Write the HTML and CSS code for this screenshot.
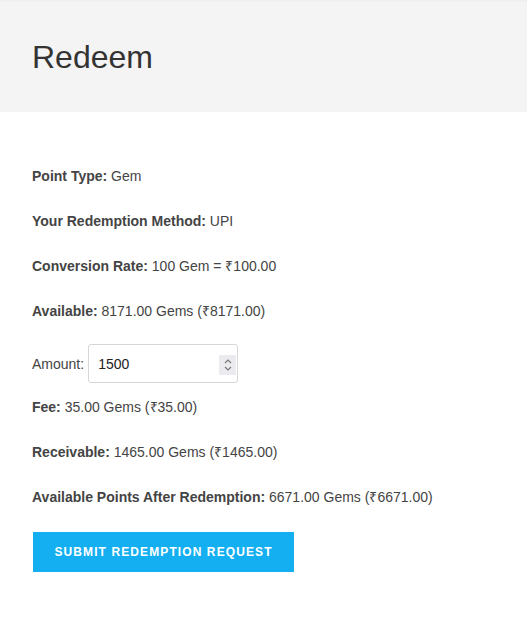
FILE: index.html
```html
<!DOCTYPE html>
<html>
<head>
<meta charset="utf-8">
<link rel="stylesheet" href="styles.css">
</head>
<body>
<header class="page-head">
  <h1 class="title">Redeem</h1>
</header>
<main class="content">
  <p class="row"><b>Point Type:</b> Gem</p>
  <p class="row"><b>Your Redemption Method:</b> UPI</p>
  <p class="row"><b>Conversion Rate:</b> 100 Gem = ₹100.00</p>
  <p class="row"><b>Available:</b> 8171.00 Gems (₹8171.00)</p>
  <div class="amount">
    <label class="amount-label">Amount:</label>
    <div class="field">
      <span class="field-value">1500</span>
      <span class="spin">
        <svg width="10" height="16" viewBox="0 0 10 16"><path d="M2 6 L5 3 L8 6 M2 10 L5 13 L8 10" fill="none" stroke="#777" stroke-width="1.1"/></svg>
      </span>
    </div>
  </div>
  <p class="row"><b>Fee:</b> 35.00 Gems (₹35.00)</p>
  <p class="row"><b>Receivable:</b> 1465.00 Gems (₹1465.00)</p>
  <p class="row"><b>Available Points After Redemption:</b> 6671.00 Gems (₹6671.00)</p>
  <button class="submit">SUBMIT REDEMPTION REQUEST</button>
</main>
</body>
</html>
```
FILE: styles.css
```css
html, body {
  margin: 0;
  padding: 0;
  background: #fff;
  font-family: "Liberation Sans", Arial, sans-serif;
  color: #444;
}
.page-head {
  background: #f4f4f4;
  border-top: 2px solid #efefef;
  height: 110px;
  display: flex;
  align-items: center;
  padding: 0 32px;
}
.title {
  margin: 0;
  font-weight: 400;
  font-size: 32px;
  color: #333;
}
.content {
  padding: 54px 32px 0;
}
.row {
  margin: 0 0 25px;
  font-size: 14px;
  line-height: 20px;
}
.row:nth-child(3), .row:nth-child(4) {
  margin-top: 1px;
}
.row b {
  font-weight: 700;
  color: #444;
}
.amount {
  display: flex;
  align-items: center;
  gap: 4px;
  margin: -2px 0 14px;
}
.amount-label {
  font-size: 14px;
  line-height: 20px;
}
.field {
  position: relative;
  height: 37px;
  border: 1px solid #d6d6d6;
  border-radius: 3px;
  display: flex;
  align-items: center;
  padding-left: 9px;
  width: 139px;
}
.field-value {
  font-size: 14px;
  color: #222;
}
.spin {
  position: absolute;
  right: 1px;
  top: 10px;
  width: 17px;
  height: 20px;
  background: #ebebef;
  display: flex;
  align-items: center;
  justify-content: center;
}
.submit {
  display: block;
  width: 261px;
  height: 40px;
  margin-left: 1px;
  border: 0;
  background: #14aff0;
  color: #fff;
  font-family: "Liberation Sans", Arial, sans-serif;
  font-weight: 700;
  font-size: 12px;
  letter-spacing: 1.1px;
  cursor: pointer;
}
```
